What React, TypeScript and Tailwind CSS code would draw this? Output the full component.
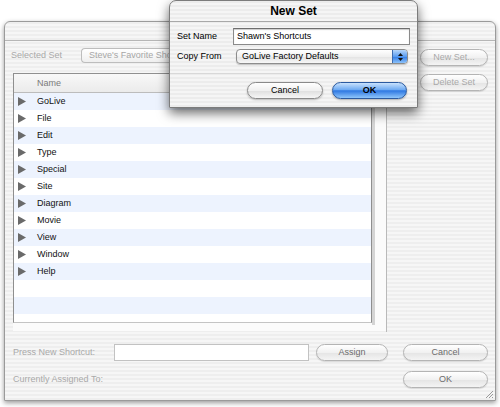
import React from "react";

const items = ["GoLive", "File", "Edit", "Type", "Special", "Site", "Diagram", "Movie", "View", "Window", "Help", "", "", ""];

function Triangle() {
  return (
    <svg width="8" height="9" viewBox="0 0 8 9" className="shrink-0">
      <polygon points="0,0 8,4.5 0,9" fill="#6a6a6a" />
    </svg>
  );
}

// grey aqua pill, used for the inactive window behind the sheet
function PillButton({ label, className, muted }: { label: string; className: string; muted?: boolean }) {
  return (
    <div
      className={`flex h-[17px] items-center justify-center rounded-full border border-[#b4b4b4] bg-[linear-gradient(180deg,#ffffff_0%,#f1f1f1_50%,#e4e4e4_51%,#f4f4f4_100%)] shadow-[0_1px_1px_rgba(0,0,0,0.12)] ${
        muted ? "text-[#a9a9a9]" : "text-[#6c6c6c]"
      } ${className}`}
    >
      {label}
    </div>
  );
}

export default function App() {
  return (
    <div className="relative h-[407px] w-[500px] overflow-hidden bg-white font-['Liberation_Sans',Arial,sans-serif] text-[9px] leading-none text-black">
      {/* back window */}
      <div className="relative ml-[4px] mt-[21px] flex h-[380px] w-[492px] flex-col rounded-t-[6px] border border-[#9a9a9a] bg-[repeating-linear-gradient(180deg,#eeeeee_0px,#eeeeee_2px,#f6f6f6_2px,#f6f6f6_4px)] shadow-[0_2px_5px_rgba(0,0,0,0.4)]">
        <div className="h-[19px] shrink-0 rounded-t-[6px] border-b border-[#b6b6b6]" />

        <div className="flex h-[291px] shrink-0">
          <div className="w-[381px] shrink-0 pl-[6px] pt-[7px]">
            <div className="flex h-[15px] items-center">
              <span className="w-[70px] text-[#a9a9a9]">Selected Set</span>
              {/* the sheet hides the rest of this popup */}
              <div className="flex h-[15px] w-[92px] items-center overflow-hidden whitespace-nowrap rounded-l-[4px] border border-r-0 border-[#bdbdbd] bg-[linear-gradient(180deg,#ffffff,#efefef)] pl-[7px] text-[#a6a6a6]">
                Steve's Favorite Shortcuts
              </div>
            </div>

            <div className="ml-[2px] mt-[10px] flex h-[258px] w-[373px] bg-[#fbfbfb]">
              <div className="flex h-[250px] w-[359px] shrink-0 flex-col overflow-hidden border border-[#8f8f8f] border-b-[#c4c4c4] bg-white">
                <div className="flex h-[19px] shrink-0 items-center border-b border-[#bcbcbc] bg-[linear-gradient(180deg,#f8f8f8,#ebebeb)] pl-[23px] text-[#7a7a7a]">
                  Name
                </div>
                {items.map((name, i) => (
                  <div
                    key={i}
                    className={`flex h-[17px] shrink-0 items-center gap-[11px] pl-[4px] ${
                      i % 2 === 0 ? "bg-[#edf3fe]" : "bg-white"
                    }`}
                  >
                    {name && <Triangle />}
                    <span className="text-[#111]">{name}</span>
                  </div>
                ))}
              </div>
              <div className="h-[252px] w-[3px] shrink-0 bg-[#d4d4d4]" />
            </div>
          </div>

          <div className="flex flex-1 flex-col gap-[8px] border-l border-[#b9b9b9] pl-[33px] pt-[8px]">
            <PillButton label="New Set..." className="w-[68px]" muted />
            <PillButton label="Delete Set" className="w-[68px]" muted />
          </div>
        </div>

        <div className="flex flex-col pl-[8px] pt-[12px]">
          <div className="flex h-[17px] items-center">
            <span className="w-[101px] text-[#a9a9a9]">Press New Shortcut:</span>
            <div className="h-[17px] w-[195px] border border-[#c2c2c2] bg-white" />
            <PillButton label="Assign" className="ml-[7px] w-[72px]" />
            <PillButton label="Cancel" className="ml-[15px] w-[85px]" />
          </div>
          <div className="mt-[10px] flex h-[17px] items-center">
            <span className="w-[390px] text-[#a9a9a9]">Currently Assigned To:</span>
            <PillButton label="OK" className="w-[85px]" />
          </div>
        </div>

        {/* resize grip */}
        <svg width="10" height="10" viewBox="0 0 10 10" className="absolute bottom-[1px] right-[1px]">
          <line x1="9" y1="2" x2="2" y2="9" stroke="#9a9a9a" strokeWidth="1" />
          <line x1="9" y1="5" x2="5" y2="9" stroke="#9a9a9a" strokeWidth="1" />
          <line x1="9" y1="8" x2="8" y2="9" stroke="#9a9a9a" strokeWidth="1" />
        </svg>
      </div>

      {/* New Set sheet */}
      <div className="absolute left-[169px] top-[0px] flex h-[108px] w-[249px] flex-col rounded-t-[7px] border border-[#7c7c7c] bg-[repeating-linear-gradient(180deg,#ececec_0px,#ececec_2px,#f5f5f5_2px,#f5f5f5_4px)] shadow-[0_5px_12px_rgba(0,0,0,0.6)]">
        <div className="flex h-[21px] shrink-0 items-center justify-center rounded-t-[7px] border-b border-[#a8a8a8] text-[12px] font-bold">
          New Set
        </div>
        <div className="flex flex-col pl-[7px] pt-[6px]">
          <div className="flex h-[17px] items-center">
            <span className="w-[56px]">Set Name</span>
            <div className="flex h-[17px] w-[177px] items-center border border-[#8a8a8a] border-t-[#6e6e6e] bg-white pl-[3px] shadow-[inset_0_1px_1px_rgba(0,0,0,0.2)]">
              Shawn's Shortcuts
            </div>
          </div>
          <div className="mt-[4px] flex h-[15px] items-center">
            <span className="w-[59px]">Copy From</span>
            <div className="flex h-[15px] w-[172px] items-stretch overflow-hidden rounded-[4px] border border-[#8c8c8c] bg-[linear-gradient(180deg,#ffffff,#f0f0f0_50%,#e2e2e2_51%,#f7f7f7)] shadow-[0_1px_1px_rgba(0,0,0,0.2)]">
              <span className="flex flex-1 items-center pl-[5px]">GoLive Factory Defaults</span>
              <div className="flex w-[15px] flex-col items-center justify-center gap-[2px] border-l border-[#3c6bb0] bg-[linear-gradient(180deg,#b6d6fb,#5a9cf0_50%,#2f7ae6_51%,#8cc2fa)]">
                <svg width="5" height="3" viewBox="0 0 5 3">
                  <polygon points="2.5,0 5,3 0,3" fill="#111" />
                </svg>
                <svg width="5" height="3" viewBox="0 0 5 3">
                  <polygon points="0,0 5,0 2.5,3" fill="#111" />
                </svg>
              </div>
            </div>
          </div>
        </div>
        <div className="mt-[9px] h-px bg-[#d8d8d8]" />
        <div className="mt-[8px] flex justify-end gap-[9px] pr-[10px]">
          <div className="flex h-[17px] w-[76px] items-center justify-center rounded-full border border-[#8a8a8a] bg-[linear-gradient(180deg,#ffffff_0%,#f0f0f0_50%,#dedede_51%,#f6f6f6_100%)] shadow-[0_1px_2px_rgba(0,0,0,0.25)]">
            Cancel
          </div>
          <div className="flex h-[17px] w-[75px] items-center justify-center rounded-full border border-[#2b5aa0] bg-[linear-gradient(180deg,#c9e2fd_0%,#6eaaf2_45%,#2f78e2_52%,#8fc6fb_100%)] font-bold shadow-[0_1px_2px_rgba(0,0,0,0.3)]">
            OK
          </div>
        </div>
      </div>
    </div>
  );
}
